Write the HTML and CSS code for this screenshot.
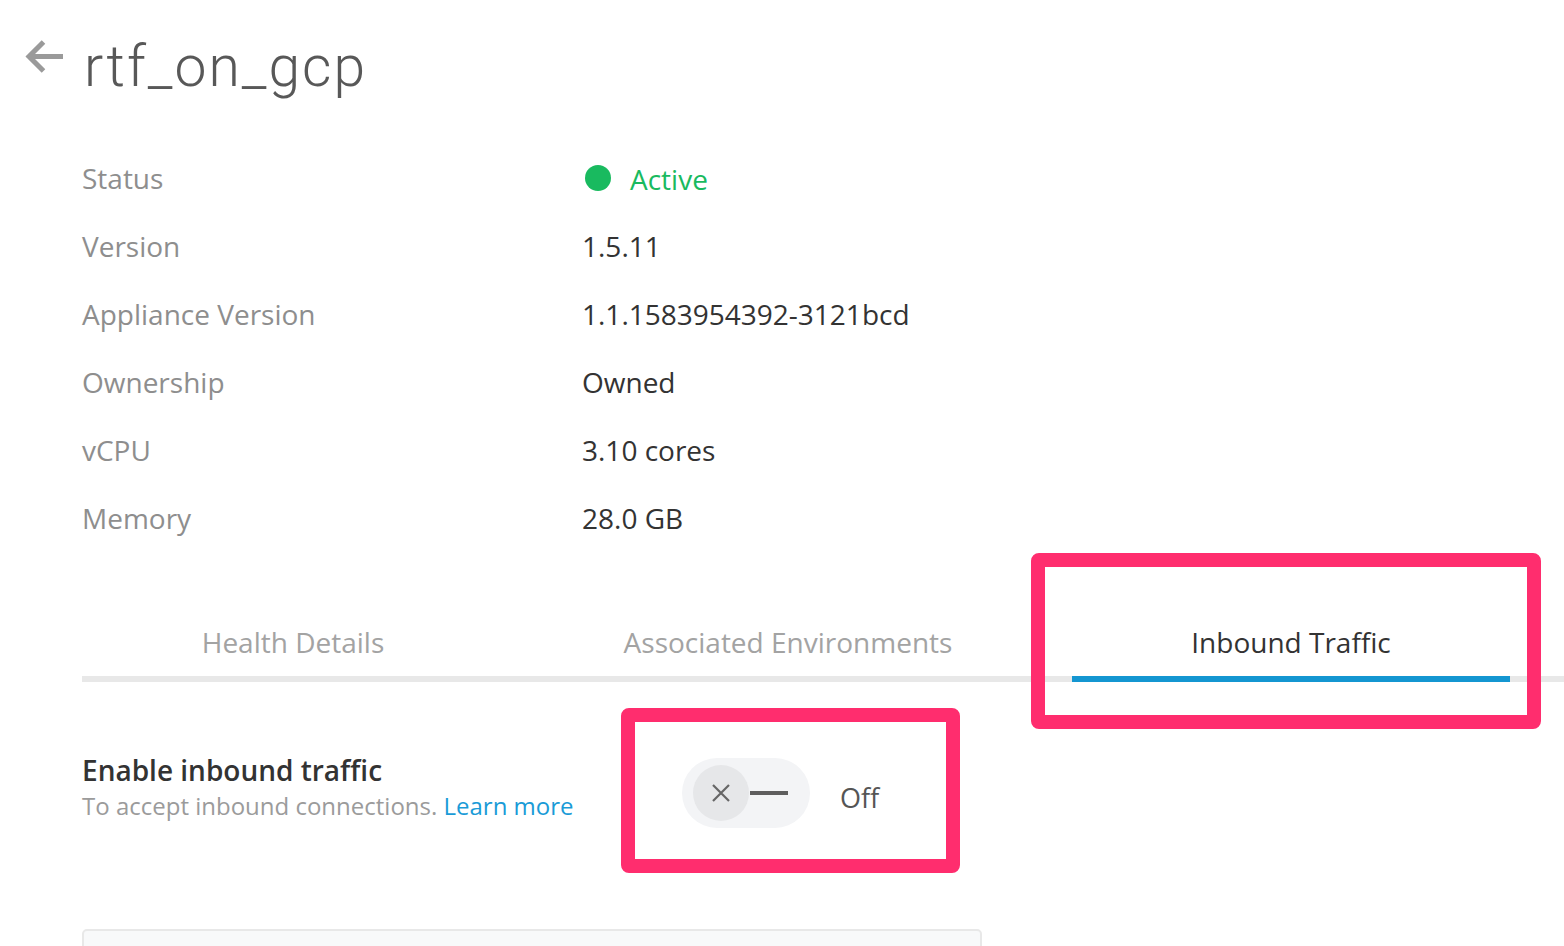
FILE: index.html
```html
<!DOCTYPE html>
<html lang="en">
<head>
<meta charset="utf-8">
<title>rtf_on_gcp</title>
<link rel="stylesheet" href="styles.css">
</head>
<body>
<div class="page">
  <header class="header">
    <svg class="back" width="40" height="36" viewBox="0 0 40 36" aria-hidden="true">
      <path d="M39 17.5 H5 M19.5 3 L5 17.5 L19.5 32" fill="none" stroke="#9a9a9a" stroke-width="5" stroke-linecap="butt" stroke-linejoin="miter"/>
    </svg>
    <h1 class="title">rtf_on_gcp</h1>
  </header>

  <dl class="details">
    <dt>Status</dt>
    <dd class="status"><span class="dot"></span>Active</dd>
    <dt>Version</dt>
    <dd>1.5.11</dd>
    <dt>Appliance Version</dt>
    <dd>1.1.1583954392-3121bcd</dd>
    <dt>Ownership</dt>
    <dd>Owned</dd>
    <dt>vCPU</dt>
    <dd>3.10 cores</dd>
    <dt>Memory</dt>
    <dd>28.0 GB</dd>
  </dl>

  <nav class="tabs">
    <div class="tab tab-1">Health Details</div>
    <div class="tab tab-2">Associated Environments</div>
    <div class="tab tab-3 active">Inbound Traffic</div>
  </nav>

  <section class="inbound">
    <div class="inbound-text">
      <div class="inbound-title">Enable inbound traffic</div>
      <div class="inbound-sub">To accept inbound connections. <a href="#" class="link">Learn more</a></div>
    </div>
    <div class="toggle-wrap">
      <div class="toggle">
        <span class="knob">
          <svg width="22" height="22" viewBox="0 0 22 22" aria-hidden="true">
            <path d="M3 3 L19 19 M19 3 L3 19" stroke="#666" stroke-width="2.2" fill="none"/>
          </svg>
        </span>
        <span class="dash"></span>
      </div>
      <span class="toggle-label">Off</span>
    </div>
  </section>

  <div class="panel"></div>

  <div class="highlight hl-tab"></div>
  <div class="highlight hl-toggle"></div>
</div>
</body>
</html>
```

FILE: styles.css
```css
html, body {
  margin: 0;
  padding: 0;
  background: #ffffff;
  overflow: hidden;
}

body {
  font-family: "Open Sans", "Liberation Sans", sans-serif;
  color: #333333;
  width: 1564px;
  height: 946px;
}

.page {
  position: relative;
  width: 1564px;
  height: 946px;
  overflow: hidden;
}

.header {
  display: flex;
  align-items: flex-start;
  padding: 39px 0 0 24px;
  height: 104px;
  box-sizing: border-box;
}

.back {
  flex: none;
}

.title {
  margin: -8px 0 0 20px;
  font-family: Roboto, "Open Sans", sans-serif;
  font-weight: 300;
  font-size: 57px;
  line-height: 72px;
  color: #585858;
  letter-spacing: 2px;
}

.details {
  display: grid;
  grid-template-columns: 500px auto;
  grid-auto-rows: 68px;
  margin: 40px 0 0 82px;
  font-size: 28px;
}

.details dt,
.details dd {
  margin: 0;
  display: flex;
  align-items: center;
  line-height: 36px;
}

.details dt {
  color: #8e8e8e;
}

.details dd {
  color: #333333;
}

.details dd.status {
  color: #19ba5f;
  padding-left: 3px;
  padding-top: 2px;
}

.dot {
  width: 26px;
  height: 26px;
  border-radius: 50%;
  background: #19ba5f;
  margin-right: 19px;
  margin-top: -2px;
}

.tabs {
  display: grid;
  grid-template-columns: 422px 438px 438px;
  column-gap: 65px;
  margin: 52px 0 0 82px;
  border-bottom: 6px solid #e8e8e8;
}

.tab {
  text-align: center;
  font-size: 28px;
  line-height: 40px;
  padding: 18px 0 14px;
  color: #a3a3a3;
  border-bottom: 6px solid transparent;
  margin-bottom: -6px;
}

.tab.active {
  color: #333333;
  border-bottom-color: #1496d1;
}

.inbound {
  display: flex;
  align-items: flex-start;
  margin: 0 0 0 82px;
  padding-top: 70px;
}

.inbound-text {
  width: 600px;
  flex: none;
}

.inbound-title {
  font-size: 28px;
  font-weight: 600;
  color: #333333;
  line-height: 36px;
}

.inbound-sub {
  font-size: 24px;
  line-height: 36px;
  color: #9b9b9b;
}

.link {
  color: #1a9bd7;
  text-decoration: none;
}

.toggle-wrap {
  display: flex;
  align-items: center;
  margin-top: 6px;
}

.toggle {
  width: 128px;
  height: 70px;
  border-radius: 35px;
  background: #f3f4f6;
  display: flex;
  align-items: center;
  padding-left: 11px;
  box-sizing: border-box;
}

.knob {
  width: 56px;
  height: 56px;
  border-radius: 50%;
  background: #e6e7e9;
  display: flex;
  align-items: center;
  justify-content: center;
  flex: none;
}

.dash {
  width: 38px;
  height: 4px;
  background: #5e5e5e;
  margin-left: 1px;
}

.toggle-label {
  margin-left: 30px;
  font-size: 27px;
  color: #555555;
  padding-top: 8px;
}

.panel {
  margin: 101px 0 0 82px;
  width: 900px;
  height: 60px;
  background: #f8f9fa;
  border: 2px solid #e8e8e8;
  border-radius: 5px;
  box-sizing: border-box;
}

.highlight {
  position: absolute;
  border: 14px solid #ff2d6e;
  border-radius: 8px;
  box-sizing: border-box;
  pointer-events: none;
}

.hl-tab {
  left: 1031px;
  top: 553px;
  width: 510px;
  height: 176px;
}

.hl-toggle {
  left: 621px;
  top: 708px;
  width: 339px;
  height: 165px;
}
```
